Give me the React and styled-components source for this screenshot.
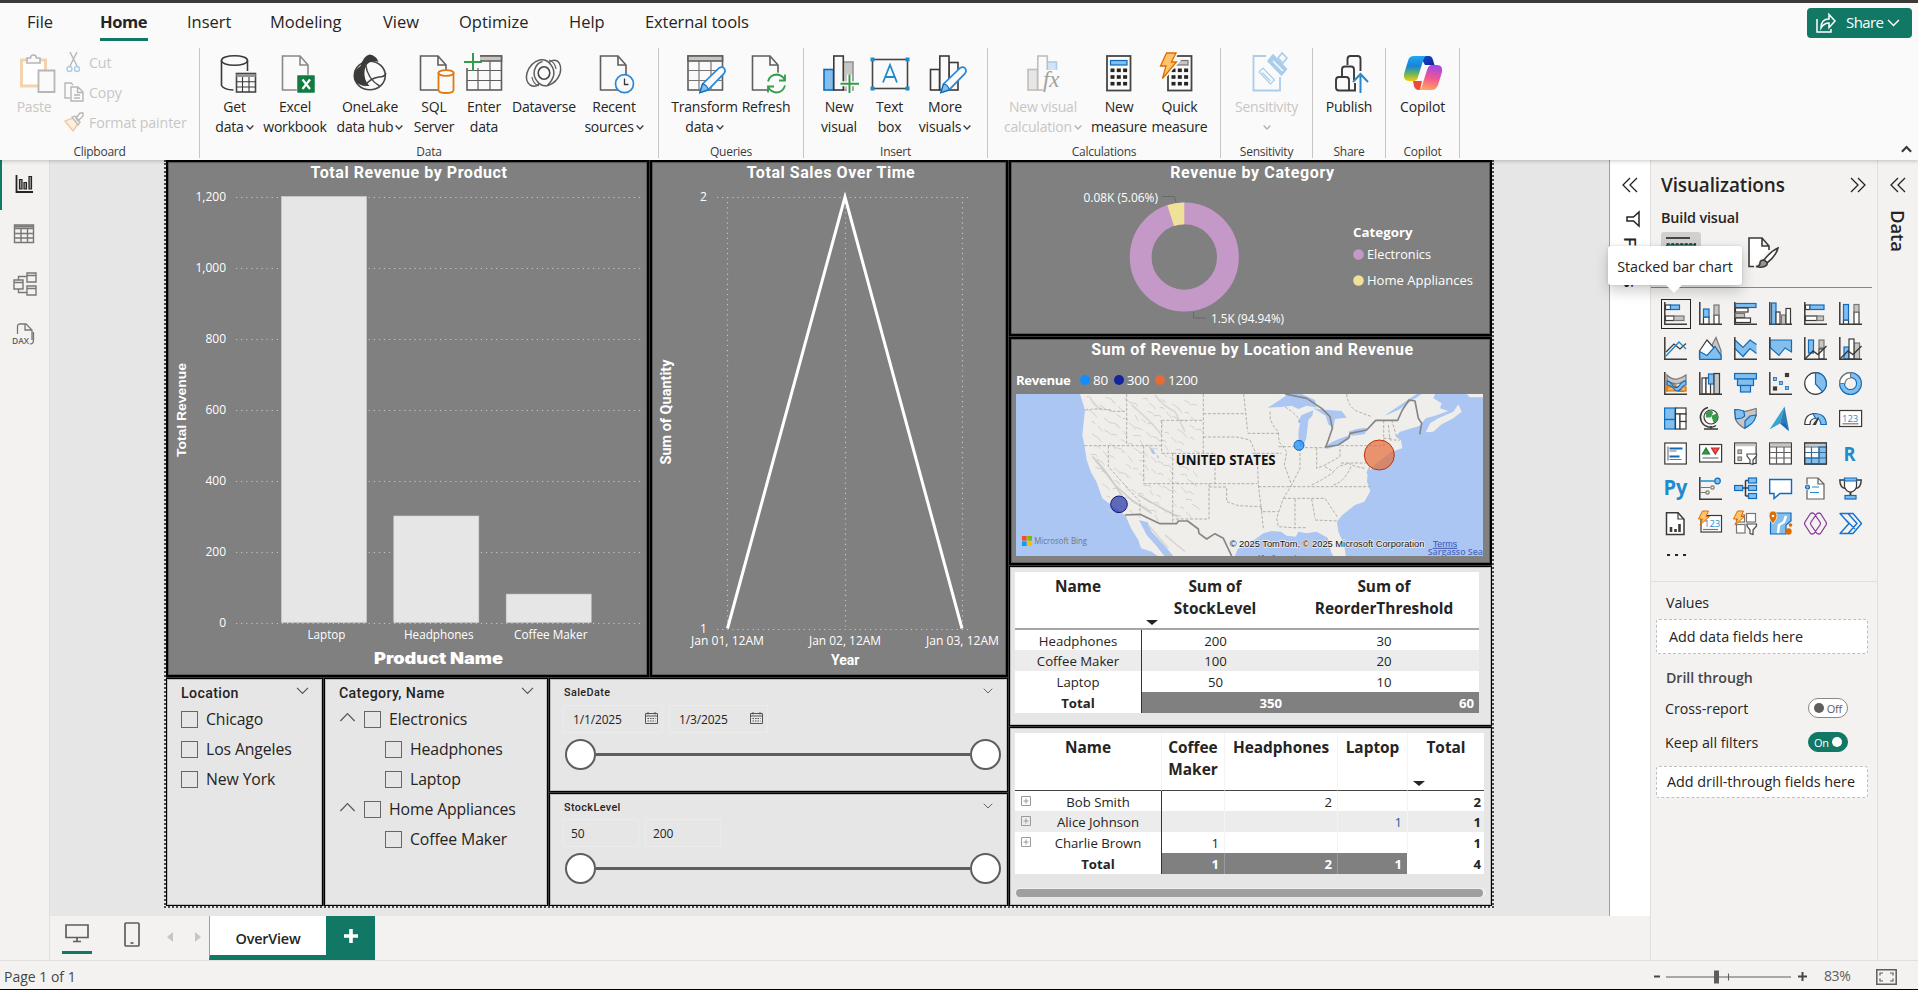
import React from "react";
import styled, { createGlobalStyle } from "styled-components";

const GREEN = "#117865";
const K = "#3b3a39";
const B = "#83beec";
const BS = "#0f6cbd";
const G = "#c8c6c4";
const GS = "#797775";
const UI = `"Open Sans", "Noto Sans", sans-serif`;
const DIN = `Roboto, "Liberation Sans", sans-serif`;

const Global = createGlobalStyle`
  * { box-sizing: border-box; }
  html, body { margin: 0; padding: 0; overflow: hidden; }
  body { font-family: ${UI}; font-size: 13.7px; color: #252423; background: #f3f2f1; }
  svg { display: block; flex: none; overflow: visible; }
`;

const Window = styled.div`
  width: 1918px; height: 990px; display: flex; flex-direction: column;
  border-top: 3px solid ${K}; border-bottom: 1px solid #000; overflow: hidden;
`;

/* ---------- ribbon ---------- */
const Header = styled.header`
  height: 157px; flex: none; background: #fafafa; display: flex; flex-direction: column;
  box-shadow: 0 1px 4px rgba(0,0,0,.22); position: relative; z-index: 2;
`;
const TabRow = styled.nav`
  height: 45px; display: flex; align-items: flex-start; padding-left: 27px;
`;
const Tab = styled.div`
  width: ${p => p.$w}px; margin-right: ${p => p.$gap}px; height: 38px; padding-top: 7px;
  font-size: 16.5px; line-height: 24px; letter-spacing: ${p => p.$ls || "0"}; white-space: nowrap;
  font-weight: ${p => (p.$active ? 700 : 400)};
  border-bottom: 3px solid ${p => (p.$active ? GREEN : "transparent")};
`;
const ShareButton = styled.button`
  margin: 5px 6px 0 auto; width: 105px; height: 30px; border: 0; border-radius: 4px; background: ${GREEN};
  color: #fff; font: 15px/20px ${UI}; letter-spacing: -0.6px; display: flex; align-items: center; padding: 0 0 0 9px;
  span { margin: -2px 4px 0 10px; }
`;
const RibbonRow = styled.div`
  display: flex; height: 110px; align-items: stretch;
`;
const Group = styled.section`
  width: ${p => p.$w}px; border-right: 1px solid #c8c6c4; display: flex; flex-direction: column;
  justify-content: space-between; align-items: stretch;
`;
const GroupBody = styled.div`
  display: flex; padding-left: ${p => p.$pad || 0}px; padding-top: 5px;
`;
const GroupName = styled.div`
  text-align: center; font-size: 12px; line-height: 16px; letter-spacing: -0.25px; height: 14px; color: #3b3a39;
`;
const RButton = styled.div`
  width: ${p => p.$w}px; display: flex; flex-direction: column; align-items: center; white-space: nowrap;
  color: ${p => (p.$off ? "#c8c6c4" : "#252423")};
  font-size: 14px; letter-spacing: -0.2px;
`;
const RLabel = styled.div`
  height: 20px; line-height: 20px; display: flex; align-items: center; justify-content: center; gap: 2px;
  &:first-of-type { margin-top: 4px; }
`;
const ClipList = styled.div`
  display: flex; flex-direction: column; color: #c8c6c4; font-size: 14.2px; letter-spacing: -0.1px; margin-top: -6px;
`;
const ClipItem = styled.div`
  height: 30px; display: flex; align-items: center; gap: 5px;
  svg { width: 20px; height: 20px; }
`;
const Collapse = styled.div`
  margin: 98px 6px 0 auto;
`;

const Chev = ({ s = 8, c = K, w = 1.6, up }) => (
  <svg width={s} height={s * 0.6} viewBox="0 0 10 6">
    <path d={up ? "M.8 5.3 5 1l4.2 4.3" : "M.8.7 5 5 9.2.7"} fill="none" stroke={c} strokeWidth={w} />
  </svg>
);
const I40 = ({ children }) => (
  <svg width="40" height="40" viewBox="0 0 40 40" fill="none" stroke={K} strokeWidth="1.6">{children}</svg>
);
const doc = (x, r, c = "#605e5c") => (
  <>
    <path d={`M${x} 3h${r - x - 8}l8 9v25h-${r - x}z`} fill="#fafafa" stroke={c} />
    <path d={`M${r - 8} 3v9h8`} stroke={c} />
  </>
);
const pencil = (x) => (
  <>
    <path d={`M${x} 39.5l2.6-8.500 16.5-16q3-2 5 .2t0 5.200l-16 16.500z`} fill="#fafafa" stroke="#2b88d8" strokeWidth="1.7" />
    <path d={`M${x} 39.5l2.6-8.500q5 1 5.5 5.900z`} fill="#83beec" stroke="#0f6cbd" strokeWidth="1.2" />
  </>
);
const calc = (x) => (
  <>
    <rect x={x} y="3" width="23.5" height="34.5" fill="#fafafa" stroke="#484644" strokeWidth="1.8" />
    {[0, 1, 2].map(r => [0, 1, 2].map(c => (
      <rect key={r + "" + c} x={x + 3.5 + c * 6.3} y={15.5 + r * 6.7} width="4" height="3.6" fill="#252423" stroke="none" />
    )))}
  </>
);

const icons = {
  paste: (
    <I40>
      <path d="M7.500 7h24v26h-24z" fill="#fff" stroke="#f3d3ad" strokeWidth="3" />
      <path d="M13 10V5h3.500q0-3 3-3t3 3H26v5z" fill="#fafafa" stroke="#b8b6b4" />
      <path d="M24.500 17.500h16v21.500h-16z" fill="#fafafa" stroke="#b8b6b4" strokeWidth="1.8" />
    </I40>
  ),
  getData: (
    <I40>
      <ellipse cx="19.5" cy="7.5" rx="13" ry="4.8" fill="#fafafa" />
      <path d="M6.500 7.500v25q2 4 12 4.500M32.500 7.500V18" />
      <rect x="21.5" y="20.5" width="19" height="18.5" fill="#fafafa" stroke="#484644" />
      <path d="M21.500 22.500h19" stroke="#979593" strokeWidth="3" />
      <path d="M21.500 28.800h19M21.500 34h19M27.500 24v15M34 24v15" strokeWidth="1.1" />
    </I40>
  ),
  excel: (
    <I40>
      {doc(7.5, 33, "#8a8886")}
      <rect x="22" y="22" width="18" height="18" rx="1" fill="#107c41" stroke="#fafafa" strokeWidth="0.5" />
      <path d="M27.500 26.500l7.500 9.500M35 26.500l-7.500 9.500" stroke="#fff" strokeWidth="2.2" />
    </I40>
  ),
  onelake: (
    <I40>
      <ellipse cx="19.8" cy="22.5" rx="15.5" ry="14.3" stroke="#484644" />
      <path d="M10.500 13q3-10 9-11.500 7 1 9 7.500-5-2-9 .5-4 2-5 8.500-1 9 5 15Q8 34 4 26 2.500 18 10.500 13z" fill={K} stroke="none" />
      <path d="M15.500 11q2 15 14 22M15 33q5-8 14-9 6 0 7-4" stroke="#484644" strokeWidth="1.5" />
    </I40>
  ),
  sql: (
    <I40>
      {doc(6.5, 32)}
      <path d="M24.500 20v17q0 3 7.500 3t7.500-3V20z" fill="#fafafa" stroke="#e07a10" strokeWidth="1.8" />
      <ellipse cx="32" cy="20" rx="7.5" ry="2.8" fill="#fafafa" stroke="#e07a10" strokeWidth="1.8" />
    </I40>
  ),
  enter: (
    <I40>
      <rect x="3" y="3" width="34.5" height="34" stroke="#605e5c" fill="#fafafa" />
      <rect x="15" y="3" width="22.5" height="5" fill="#c8c6c4" stroke="#605e5c" />
      <path d="M14 8v29M26 8v29M3 17.500h34.500M3 27.500h34.500" stroke="#605e5c" strokeWidth="1.2" />
      <path d="M0-1h16v16H0z" fill="#fafafa" stroke="none" />
      <path d="M9 0v18M0 9h18" stroke="#359c4a" strokeWidth="2" />
    </I40>
  ),
  dataverse: (
    <I40>
      <path d="M27 12Q23 6 15.500 7 6 10 3 20q-2 8 3 12 5 3 9-1M13 28q4 6 11 4.500 9-3 12-12 2-8-2-12-5-3-9 1" stroke="#605e5c" strokeWidth="1.5" />
      <path d="M27 12q4 5 2.500 11-2 6-6 9M13 28q-4-5-2.500-11 2-7 8-8.500" stroke="#605e5c" strokeWidth="1.5" />
      <ellipse cx="20" cy="20" rx="5.8" ry="6.2" stroke="#484644" />
      <path d="M25 7q6 2 7 9M15 33q-6-2-7-9" stroke="#605e5c" strokeWidth="1.2" />
    </I40>
  ),
  recent: (
    <I40>
      {doc(6.5, 32)}
      <circle cx="30.5" cy="30.7" r="9" fill="#fafafa" stroke="#2b88d8" strokeWidth="1.7" />
      <path d="M30.500 25.500v6h4" strokeWidth="1.3" />
    </I40>
  ),
  transform: (
    <I40>
      <rect x="3" y="3" width="34.5" height="34" stroke="#605e5c" fill="#fafafa" />
      <rect x="3" y="3" width="34.5" height="5" fill="#c8c6c4" stroke="#605e5c" />
      <path d="M14 8v29M26 8v29M3 17.500h34.500M3 27.500h34.500" stroke="#797775" strokeWidth="1.2" />
      {pencil(15)}
    </I40>
  ),
  refresh: (
    <I40>
      {doc(6.5, 32)}
      <circle cx="30.5" cy="30.5" r="11" fill="#fafafa" stroke="none" />
      <path d="M22 28.500q2-7 9-7 5 .5 8 5.500M39 21.500v6h-6M39 32.500q-2 7-9 7-5-.5-8-5.500M22 39.500v-6h6" stroke="#359c4a" strokeWidth="1.8" />
    </I40>
  ),
  newVisual: (
    <I40>
      <rect x="24" y="9" width="10" height="28" fill="#c8c6c4" stroke="#979593" />
      <rect x="5" y="16.5" width="9.5" height="20.5" fill={B} stroke={BS} />
      <rect x="14.8" y="3" width="9.5" height="34" fill="#fafafa" />
      <path d="M30.500 21.500v18.500M21.500 30.700h18.500" stroke="#fafafa" strokeWidth="5" />
      <path d="M30.500 21.500v18.500M21.500 30.700h18.500" stroke="#359c4a" strokeWidth="2" />
    </I40>
  ),
  textBox: (
    <I40>
      <rect x="2.5" y="6.5" width="35" height="29" stroke="#484644" />
      {[[0.5, 4.5], [35.5, 4.5], [0.5, 33.5], [35.5, 33.5]].map(([x, y]) => <rect key={x + "," + y} x={x} y={y} width="4" height="4" fill="#1e8bcd" stroke="none" />)}
      <path d="M13 29.500 20 12l7 17.500M15.300 24h9.400" stroke="#1e8bcd" strokeWidth="1.8" />
    </I40>
  ),
  moreVisuals: (
    <I40>
      <rect x="24" y="9.5" width="9" height="27.5" />
      <rect x="5.5" y="16.5" width="9" height="20.5" />
      <rect x="14.8" y="3" width="9.2" height="34" fill="#fafafa" />
      {pencil(16)}
    </I40>
  ),
  visualCalc: (
    <I40>
      <rect x="24" y="9" width="9.5" height="12" fill="#cfe4f6" stroke="#a9cdea" />
      <rect x="5" y="16.5" width="9.5" height="20.5" fill="#e8e6e4" stroke="#c0bebc" />
      <rect x="14.8" y="3" width="9.500" height="34" fill="#fafafa" stroke="#c0bebc" />
      <path d="M20 17h20v22H20z" fill="#fafafa" stroke="none" />
      <text x="20" y="34" fontFamily="Liberation Serif, serif" fontStyle="italic" fontSize="23" fill="#a3a19f" stroke="none">fx</text>
    </I40>
  ),
  calc: (<I40>{calc(8)}<rect x="11.5" y="7.5" width="16.5" height="4.5" fill="#83beec" stroke="#0f6cbd" strokeWidth="1.2" /></I40>),
  quick: (
    <I40>
      {calc(8)}<rect x="15" y="7.5" width="13" height="4.5" fill="#c8c6c4" stroke="#797775" strokeWidth="1.2" />
      <path d="M6.500 0h9.500l-4.500 9h5L2.500 25.500 6 13H.5z" fill="#ffc36b" stroke="#fafafa" strokeWidth="4.5" />
      <path d="M6.500 0h9.500l-4.500 9h5L2.500 25.500 6 13H.5z" fill="#ffc36b" stroke="#dc6b00" strokeWidth="1.3" />
    </I40>
  ),
  sensitivity: (
    <I40>
      <path d="M19 3H6.500v34.500h26.500V24" stroke="#a9cdea" strokeWidth="1.8" />
      <path d="M12 19l4-4L27.500 27l-4 4zM15 19.500l8.500 8.500" stroke="#a9cdea" strokeWidth="1.2" />
      <path d="M21 8l5-6 13.500 14-5 6z" fill="#a9cdea" stroke="#a9cdea" />
      <path d="M26 8l10 10" stroke="#fafafa" strokeWidth="1.5" />
      <path d="M31 5l4-5 5 5-4 5z" fill="#fafafa" stroke="#a9cdea" />
    </I40>
  ),
  publish: (
    <I40>
      <path d="M18.500 12V6q0-3 3-3h7q3 0 3 3v12M13 23v-6.500q0-3 3-3h6q3 0 3 3V27M26 30v7.500H10q-3 0-3-3V27q0-3 3-3h7q3 0 3 3v10" stroke="#3b3a39" strokeWidth="1.9" />
      <path d="M31.500 40V21.500M24 29l7.500-8 7.500 8" stroke="#2b88c8" strokeWidth="2" />
    </I40>
  ),
  copilot: (
    <svg width="40" height="40" viewBox="0 0 40 40">
      <defs>
        <linearGradient id="cA" x1="0" y1="0" x2="0" y2="1"><stop offset="0" stopColor="#22a7f2" /><stop offset=".4" stopColor="#1683d8" /><stop offset=".72" stopColor="#6bb75a" /><stop offset="1" stopColor="#fdc70a" /></linearGradient>
        <linearGradient id="cB" x1=".5" y1="0" x2=".3" y2="1"><stop offset="0" stopColor="#a548e8" /><stop offset=".5" stopColor="#f0588f" /><stop offset="1" stopColor="#ffa95a" /></linearGradient>
        <linearGradient id="cC" x1="0" y1="0" x2="1" y2="1"><stop offset="0" stopColor="#0b54c4" /><stop offset="1" stopColor="#1a1f9e" /></linearGradient>
      </defs>
      <path d="M17 3h9q3 0 4 4l1.500 5H22z" fill="url(#cC)" />
      <path d="M10 28h9l-2 9h-1q-4 0-5-4z" fill="#ee4a35" />
      <path d="M11 3h12q-2 1-3 5l-5 16q-1 4-4 4H6q-6 0-5-7l4-13q1-5 6-5z" fill="url(#cA)" />
      <path d="M24 12h10q6 0 5 7l-4 13q-2 5-6 5H15q3 0 4-4l5-16q1-4 4-5z" fill="url(#cB)" />
    </svg>
  ),
};

const clipIcons = {
  cut: <svg viewBox="0 0 20 20" fill="none"><path d="M6 0l7 14M13 0L6 14" stroke="#b8b6b4" strokeWidth="1.4" /><circle cx="5.5" cy="17" r="2.5" stroke="#a9cdea" strokeWidth="1.4" /><circle cx="13" cy="17" r="2.5" stroke="#a9cdea" strokeWidth="1.4" /></svg>,
  copy: <svg viewBox="0 0 20 20" fill="none" stroke="#b8b6b4" strokeWidth="1.4"><path d="M6 16H1V1h6l2 2M7 5h7l5 5v9H7zM13.500 5v5.500H19M10 13h6M10 16h6" /></svg>,
  brush: <svg viewBox="0 0 20 20" fill="none" stroke="#b8b6b4" strokeWidth="1.3"><path d="M1 9l8-3 5 6-5 7z" fill="#fdeedd" stroke="#f0c49a" /><path d="M8 5l3-1 5 6-2 3zM12 6l4-5h3v3l-5 5z" fill="#fafafa" /></svg>,
};

const RibbonButton = ({ w, icon, a, b, chev, off }) => (
  <RButton $w={w} $off={off}>
    {icons[icon]}
    <RLabel>{a}</RLabel>
    {(b || chev) && <RLabel>{b}{chev && <Chev c={off ? "#b3b0ad" : K} />}</RLabel>}
  </RButton>
);

const ribbonGroups = [
  { name: "Data", w: 459, pad: 8, items: [
    { w: 53, icon: "getData", a: "Get", b: "data", chev: 1 }, { w: 68, icon: "excel", a: "Excel", b: "workbook" },
    { w: 82, icon: "onelake", a: "OneLake", b: "data hub", chev: 1 }, { w: 46, icon: "sql", a: "SQL", b: "Server" },
    { w: 54, icon: "enter", a: "Enter", b: "data" }, { w: 66, icon: "dataverse", a: "Dataverse" },
    { w: 74, icon: "recent", a: "Recent", b: "sources", chev: 1 }] },
  { name: "Queries", w: 145, pad: 9, items: [
    { w: 73, icon: "transform", a: "Transform", b: "data", chev: 1 }, { w: 50, icon: "refresh", a: "Refresh" }] },
  { name: "Insert", w: 184, pad: 8, items: [
    { w: 54, icon: "newVisual", a: "New", b: "visual" }, { w: 47, icon: "textBox", a: "Text", b: "box" },
    { w: 64, icon: "moreVisuals", a: "More", b: "visuals", chev: 1 }] },
  { name: "Calculations", w: 233, pad: 10, items: [
    { w: 90, icon: "visualCalc", a: "New visual", b: "calculation", chev: 1, off: 1 }, { w: 62, icon: "calc", a: "New", b: "measure" },
    { w: 59, icon: "quick", a: "Quick", b: "measure" }] },
  { name: "Sensitivity", w: 92, pad: 0, items: [{ w: 91, icon: "sensitivity", a: "Sensitivity", chev: 1, off: 1 }] },
  { name: "Share", w: 73, pad: 0, items: [{ w: 72, icon: "publish", a: "Publish" }] },
  { name: "Copilot", w: 74, pad: 0, items: [{ w: 73, icon: "copilot", a: "Copilot" }] },
];

const tabs = [["File", 26, 47], ["Home", 48, 39, "-0.4px"], ["Insert", 43, 40], ["Modeling", 74, 39], ["View", 38, 38], ["Optimize", 71, 39], ["Help", 36, 40], ["External tools", 104, 0, "-0.1px"]];

function Ribbon() {
  return (
    <Header>
      <TabRow>
        {tabs.map(([t, w, g, ls]) => <Tab key={t} $w={w} $gap={g} $ls={ls} $active={t === "Home"}>{t}</Tab>)}
        <ShareButton>
          <svg width="20" height="20" viewBox="0 0 20 20" fill="none" stroke="#fff" strokeWidth="1.5">
            <path d="M1 6v13h14v-3" /><path d="M5 15q0-9 8-9V1.500L19 8l-6 6.500V10q-5 0-8 5z" />
          </svg>
          <span>Share</span>
          <Chev s={13} c="#fff" w={1.1} />
        </ShareButton>
      </TabRow>
      <RibbonRow>
        <Group $w={200}>
          <GroupBody $pad={4}>
            <RibbonButton w={60} icon="paste" a="Paste" off />
            <ClipList>
              <ClipItem>{clipIcons.cut}Cut</ClipItem>
              <ClipItem>{clipIcons.copy}Copy</ClipItem>
              <ClipItem>{clipIcons.brush}Format painter</ClipItem>
            </ClipList>
          </GroupBody>
          <GroupName>Clipboard</GroupName>
        </Group>
        {ribbonGroups.map(g => (
          <Group key={g.name} $w={g.w}>
            <GroupBody $pad={g.pad}>{g.items.map((it, i) => <RibbonButton key={i} {...it} />)}</GroupBody>
            <GroupName>{g.name}</GroupName>
          </Group>
        ))}
        <Collapse><Chev s={11} up w={2} /></Collapse>
      </RibbonRow>
    </Header>
  );
}

/* ---------- body ---------- */
const Body = styled.div`display: flex; height: 800px; flex: none;`;
const Rail = styled.aside`
  width: 50px; background: #f3f2f1; border-right: 1px solid #e1dfdd; display: flex; flex-direction: column; flex: none;
`;
const RailItem = styled.div`
  height: 50px; display: flex; align-items: center; padding-left: 13px; padding-bottom: 2px;
  border-left: ${p => (p.$active ? `2px solid ${GREEN}` : "0")};
`;
const Center = styled.main`width: 1600px; display: flex; flex-direction: column; flex: none;`;
const Work = styled.div`height: 756px; display: flex;`;
const Canvas = styled.div`width: 1559px; background: #e6e6e6; padding-left: 114px; display: flex; align-items: flex-start;`;
const FilterStrip = styled.div`
  width: 41px; background: #fff; border-left: 1px solid #a19f9d; display: flex; flex-direction: column; align-items: center;
  padding-top: 17px;
`;
const FilterIcon = styled.div`margin: 18px 0 0 5px;`;
const Vertical = styled.div`
  writing-mode: vertical-rl; font-size: ${p => p.$fs || 17}px; font-weight: 600; line-height: 22px; letter-spacing: ${p => p.$ls || "0"};
  margin-top: ${p => p.$mt}px;
`;
const Report = styled.div`
  width: 1330px; height: 748px; background: #3a3a3a; display: flex; gap: 1px;
  border: 2px dotted #4a4a4a; border-top: 0;
  background-clip: padding-box;
`;
const Col = styled.div`display: flex; flex-direction: column; gap: 1px; width: ${p => p.$w}px; flex: none;`;
const Row = styled.div`display: flex; gap: 1px; height: ${p => p.$h}px; flex: none;`;
const Visual = styled.section`
  width: ${p => (p.$w ? p.$w + "px" : "auto")}; height: ${p => (p.$h ? p.$h + "px" : "auto")}; flex: none;
  border: ${p => (p.$dark ? 2 : 1)}px solid #000; background: ${p => (p.$dark ? "#808080" : "#e6e6e6")};
  box-shadow: inset 0 0 0 1px ${p => (p.$dark ? "#5c5c5c" : "#bdbdbd")};
  overflow: hidden;
`;
const VTitle = styled.h3`
  margin: 0; height: 22px; text-align: center; color: #fff; font: 700 16px/22px ${DIN};
  letter-spacing: ${p => p.$ls || "0.3px"}; padding-left: ${p => p.$pl || 0}px;
`;

const T = ({ x, y, w, children, size = 12, anchor = "start", weight = 400, fill = "#fff", family = UI, rot }) => (
  <text x={x} y={y} fontSize={size} textAnchor={anchor} fontWeight={weight} fill={fill} fontFamily={family}
    textLength={w} lengthAdjust="spacingAndGlyphs" transform={rot ? `rotate(-90 ${x} ${y})` : undefined}>{children}</text>
);

const dots = { stroke: "#c4c4c4", strokeWidth: 1.2, strokeDasharray: "1.2 3.9", fill: "none" };

function BarChart() {
  const ticks = ["0", "200", "400", "600", "800", "1,000", "1,200"];
  const bars = [[281.5, 1200], [393.8, 300], [506.2, 80]];
  return (
    <Visual $dark $w={483} $h={517}>
      <VTitle $ls="0.56px" $pl={3}>Total Revenue by Product</VTitle>
      <svg width="479" height="491" viewBox="168 184 479 491">
        {ticks.map((t, i) => (
          <g key={t}>
            <path d={`M236 ${623.5 - i * 71}H642`} {...dots} />
            <T x={226} y={627 - i * 71} anchor="end" size={12}>{t}</T>
          </g>
        ))}
        {bars.map(([x, v]) => <rect key={x} x={x} y={622.5 - v * 0.355} width="85" height={v * 0.355} fill="#e6e6e6" stroke="#cfcfcf" strokeWidth="0.6" />)}
        <T x={307.5} y={638.5} w={38}>Laptop</T>
        <T x={404} y={638.5} w={69.5}>Headphones</T>
        <T x={514} y={638.5} w={73.5}>Coffee Maker</T>
        <T x={374} y={664} w={129} size={16} weight={900} family={`Inter, "Liberation Sans", sans-serif`}>Product Name</T>
        <T x={186} y={457} w={94} size={13.5} weight={700} family={`"Liberation Sans", sans-serif`} rot>Total Revenue</T>
      </svg>
    </Visual>
  );
}

function LineChart() {
  return (
    <Visual $dark $w={358} $h={517}>
      <VTitle $ls="0.55px" $pl={4}>Total Sales Over Time</VTitle>
      <svg width="354" height="491" viewBox="652 184 354 491">
        <path d="M717 197.500H972M717 629.500H972M727.500 197V629M845.500 197V629M962.500 197V629" {...dots} />
        <path d="M727.500 628.500L845 197 962 628.500" fill="none" stroke="#fff" strokeWidth="3" />
        <T x={700} y={201} size={12}>2</T>
        <T x={700} y={632.5} size={12}>1</T>
        <T x={691} y={645} w={73} size={11.8}>Jan 01, 12AM</T>
        <T x={809} y={645} w={72} size={11.8}>Jan 02, 12AM</T>
        <T x={926} y={645} w={73} size={11.8}>Jan 03, 12AM</T>
        <T x={831} y={665} w={28.5} size={14} weight={700} family={DIN}>Year</T>
        <T x={671} y={464.5} w={105} size={14} weight={700} family={DIN} rot>Sum of Quantity</T>
      </svg>
    </Visual>
  );
}

function Donut() {
  const a = (-18.2 * Math.PI) / 180, cx = 1184.3, cy = 257, R = 54.5, r = 32.7;
  const p = (rad) => `${cx + rad * Math.sin(a)} ${cy - rad * Math.cos(a)}`;
  return (
    <Visual $dark $h={176}>
      <VTitle $ls="0.65px" $pl={4}>Revenue by Category</VTitle>
      <svg width="479" height="150" viewBox="1011 184 479 150">
        <circle cx={cx} cy={cy} r={(R + r) / 2} stroke="#c499c8" strokeWidth={R - r} fill="none" />
        <path d={`M${p(R)}A${R} ${R} 0 0 1 ${cx} ${cy - R}V${cy - r}A${r} ${r} 0 0 0 ${p(r)}Z`} fill="#f0e199" />
        <path d="M1162 196.500h12.500l1.500 6M1193.500 312v6h13" fill="none" stroke="#6a6866" strokeWidth="1" />
        <T x={1083.5} y={202} w={74.5} size={12.5}>0.08K (5.06%)</T>
        <T x={1211} y={323} w={73} size={12.5}>1.5K (94.94%)</T>
        <T x={1353} y={237} w={59.5} size={13} weight={700}>Category</T>
        <circle cx="1358.5" cy="254.5" r="5.3" fill="#c499c8" />
        <T x={1367} y={259} w={64} size={13.5}>Electronics</T>
        <circle cx="1358.5" cy="280.5" r="5.3" fill="#f0e199" />
        <T x={1367} y={285} w={106} size={13.5}>Home Appliances</T>
      </svg>
    </Visual>
  );
}

const MapLegend = styled.div`
  display: flex; align-items: center; height: 20px; margin-top: 9px; padding-left: 5px; color: #fff; font-size: 13.5px;
  b { letter-spacing: -0.35px; width: 64px; font-size: 13.2px; }
`;
const LegendItem = styled.span`
  display: flex; align-items: center; gap: 3px; margin-right: 6px; letter-spacing: -0.3px; white-space: nowrap;
  &::before { content: ""; width: 10px; height: 10px; border-radius: 50%; background: ${p => p.$c}; }
`;
const MapFrame = styled.div`margin: 4px 0 0 5px; width: 467px; height: 162px; overflow: hidden;`;

const terrain = Array.from({ length: 150 }, (_, i) => {
  const x = 245 + ((i * 89) % 330), y = 35 + ((i * 53) % 360);
  return x - 245 < (y - 170) * 0.3 ? "" : `M${x} ${y}l${6 + (i % 5) * 3} ${(i % 3) * 6 - 1}l4 ${5 + (i % 4)}`;
}).join("");

function MapVisual() {
  return (
    <Visual $dark $h={228}>
      <VTitle $ls="0.56px" $pl={4}>Sum of Revenue by Location and Revenue</VTitle>
      <MapLegend><b>Revenue</b><LegendItem $c="#118dff">80</LegendItem><LegendItem $c="#12239e">300</LegendItem><LegendItem $c="#e66c37">1200</LegendItem></MapLegend>
      <MapFrame>
        <svg width="467" height="162" viewBox="33 27 1401 486">
          <rect x="33" y="27" width="1401" height="486" fill="#abc6f2" />
          <path d="M225 27L240 75 236 110 232 150 238 180 245 225 258 262 275 292 292 340 330 368 362 392 378 430 400 465 408 490 440 500 458 513H478L452 480 425 450 402 405 428 412 440 440 475 478 505 513H690L698 492 730 478 775 445 800 438 828 440 845 452 872 455 880 440 905 445 935 440 968 458 978 500 985 513H1022L1018 480 1000 440 996 410 1012 390 1050 360 1078 350 1096 318 1086 290 1088 265 1108 240 1140 215 1160 200 1192 190 1188 165 1172 155 1185 140 1245 122 1262 100 1290 92 1330 78 1305 70 1310 55 1285 40 1290 27H1250L1180 75 1140 92 1150 84 1235 27Z" fill="#efeeea" />
          <path d="M1262 142L1275 115 1300 100 1345 80 1360 58 1370 80 1345 100 1310 118 1285 140Z M1385 27h49v10h-40z" fill="#efeeea" />
          <g fill="#abc6f2">
            <path d="M788 68L820 48 850 27H890L930 45 935 68 905 62 880 72 860 62 830 66Z" />
            <path d="M884 182Q876 150 885 115L878 112 890 90 925 76 922 92 910 105 904 160 893 186Z" />
            <path d="M925 70L960 74 1010 78 1025 98 990 102 985 130 970 118 962 92Z" />
            <path d="M958 186Q985 165 1036 150L1030 164 985 186 965 192Z" />
            <path d="M1030 140Q1060 126 1090 130L1078 148 1040 152Z" />
            <path d="M430 182l16 12 6 14-10-2zM455 206l8 12-6 2z" />
            <path d="M1085 262l8-20 6 20-4 24z" />
          </g>
          <path d={terrain} fill="none" stroke="#cfcdc7" strokeWidth="2.5" />
          <path d="M262 215Q290 240 330 300L380 345 440 385M270 225Q310 270 350 330M400 330L470 370 520 395" fill="none" stroke="#c9c7c1" strokeWidth="5" opacity=".8" />
          <path d="M450 30q20 30 60 50l30 60M255 35q10 30 40 40M380 60q60 50 90 90M480 450l60 50M430 420l60 70" fill="none" stroke="#dad8d2" strokeWidth="5" />
          <path d="M240 75q60-8 80 4h45M365 27V180M238 182H470M310 182V245L405 350V385M416 182V296M470 106V205M470 106H595M595 27V205M595 86H724M716 27L728 140M595 156H695L735 165M505 205H630V296M503 205V410M470 205H505M416 296H757M612 296V402H505M728 145H820M735 165L757 215 760 300M742 205H830M612 306H665V350L700 362 768 365M760 305H850M760 300L770 380H820M768 365L775 430M820 185H880M796 80Q790 110 820 140L822 170 845 200 838 240 860 300 835 340 815 400 820 425 860 428M870 342V430M920 342L930 400M885 190V250L860 300M850 305H1095M835 340H960L1000 400M865 428H905M930 405L1000 408M935 188V250L960 240 1005 215V185M900 188H960M1008 182H1140M1008 234H1085M960 245L985 260 1000 245 1030 235M920 300Q960 280 985 262M1030 235Q1050 245 1080 250M985 300Q1020 290 1040 240M1136 106V180M1150 120L1155 165H1185M1136 160H1160M1160 105L1175 155M1025 27Q1030 70 1060 80L1100 95M840 66Q880 90 885 112" fill="none" stroke="#aaa69f" strokeWidth="2.6" strokeDasharray="9 5" />
          <path d="M360 390L405 388 465 416H515L520 408H548L580 432 582 445 605 462 630 446 655 460 680 513M840 27L905 40 950 70 975 95 982 130 970 165 962 186 1000 180 1032 158 1035 145 1085 135 1112 106H1178L1192 75 1212 45 1230 48 1240 100 1250 115 1244 148" fill="none" stroke="#868686" strokeWidth="5" strokeLinejoin="round" />
          <circle cx="342" cy="358" r="25" fill="#12239e" fillOpacity=".65" stroke="#12187e" strokeWidth="3" />
          <circle cx="882" cy="181" r="15" fill="#118dff" fillOpacity=".7" stroke="#1160c0" strokeWidth="3" />
          <circle cx="1123" cy="210" r="45" fill="#e66c37" fillOpacity=".7" stroke="#b5360c" strokeWidth="3" />
          <T x={512} y={239} w={300} size={41} weight={700} fill="#111">UNITED STATES</T>
          <path d="M51 453h14v14h-14z" fill="#f25022" /><path d="M67 453h14v14h-14z" fill="#7fba00" />
          <path d="M51 469h14v14h-14z" fill="#00a4ef" /><path d="M67 469h14v14h-14z" fill="#ffb900" />
          <T x={88} y={477} w={158} size={26} fill="#6f7680">Microsoft Bing</T>
          <g stroke="#efeeea" strokeWidth="4" paintOrder="stroke">
            <T x={674} y={486} w={584} size={28} fill="#111" family={`"Liberation Sans", sans-serif`}>© 2025 TomTom, © 2025 Microsoft Corporation</T>
          </g>
          <T x={1283} y={486} w={74} size={28} fill="#3b55b8" family={`"Liberation Sans", sans-serif`}>Terms</T>
          <path d="M1283 490h74" stroke="#3b55b8" strokeWidth="3" />
          <T x={1268} y={511} w={166} size={27} weight={600} fill="#4a6cc4">Sargasso Sea</T>
          <T x={724} y={530} w={180} size={27} weight={600} fill="#4a6cc4">Gulf of Mexico</T>
        </svg>
      </MapFrame>
    </Visual>
  );
}

/* ---------- tables ---------- */
const Table = styled.div`
  margin: 5px 0 0 5px; width: ${p => p.$w}px; display: grid; grid-template-columns: ${p => p.$cols};
  grid-template-rows: 58px 20px 21px 21px 21px; background: #fff; font-size: 13.2px;
`;
const Th = styled.div`
  font-weight: 700; font-size: 15.4px; line-height: 22px; text-align: center; padding-top: 4px; white-space: nowrap;
  border-bottom: ${p => p.$line}; display: flex; flex-direction: column; justify-content: space-between;
  ${p => p.$sep && "border-left: 1px solid #f3f3f3;"}
`;
const Sort = styled.i`
  width: 0; height: 0; border: 6px solid transparent; border-top: 5px solid #252423; border-bottom: 0; margin: 0 0 4px 5px;
`;
const Td = styled.div`
  line-height: ${p => (p.$foot ? 22 : 23)}px; white-space: nowrap; overflow: hidden;
  text-align: ${p => p.$al || "center"}; padding: 0 ${p => p.$pr || 0}px 0 ${p => p.$pl || 0}px;
  font-weight: ${p => (p.$b || p.$foot ? 700 : 400)}; color: ${p => p.$c || "#252423"};
  background: ${p => p.$bg || "transparent"};
  border-left: ${p => p.$bl || "0"};
`;
const NameCell = styled(Td)`
  display: flex; align-items: flex-start; padding-left: 6px;
  svg { margin-top: 5px; }
  span { flex: 1; padding-left: 4px; }
`;
const Scroll = styled.div`
  margin: 14px 5px 0 5px; height: 9px; border-radius: 5px; background: #efefef; padding: 1px 3px 0 1px;
  &::before { content: ""; display: block; height: 7.5px; border-radius: 4px; background: #a19f9d; }
`;
const Plus = () => (
  <svg width="10" height="10" viewBox="0 0 10 10"><path d="M.5.5h9v9h-9zM5 2.500v5M2.500 5h5" fill="none" stroke="#9a9a9a" /></svg>
);

function StockTable() {
  const rows = [["Headphones", "200", "30"], ["Coffee Maker", "100", "20"], ["Laptop", "50", "10"]];
  const line = "2px solid #a6a6a6";
  const dark = { $foot: true, $al: "right", $c: "#fff", $bg: "#808080" };
  return (
    <Visual $h={160}>
      <Table $w={464} $cols="126px 148px 190px">
        <Th $line={line}>Name</Th>
        <Th $line={line}><span>Sum of<br />StockLevel</span><Sort /></Th>
        <Th $line={line}><span>Sum of<br />ReorderThreshold</span></Th>
        {rows.map((r, i) => r.map((c, j) => (
          <Td key={i + "-" + j} $bg={i === 1 ? "#ececec" : 0} $bl={j === 1 ? "1px solid #333" : 0}>{c}</Td>
        )))}
        <Td $foot>Total</Td>
        <Td {...dark} $pr={7} $bl="1px solid #333">350</Td>
        <Td {...dark} $pr={5}>60</Td>
      </Table>
    </Visual>
  );
}

function MatrixTable() {
  const rows = [["Bob Smith", "", "2", "", "2"], ["Alice Johnson", "", "", "1", "1"], ["Charlie Brown", "1", "", "", "1"]];
  const line = "1px solid #444";
  const sep = "1px solid #f3f3f3";
  const dark = { $foot: true, $al: "right", $pr: 5, $c: "#fff", $bg: "#808080" };
  return (
    <Visual $h={179}>
      <Table $w={469} $cols="146px 63px 113px 70px 77px">
        <Th $line={line}>Name</Th>
        <Th $line={line} $sep>Coffee<br />Maker</Th>
        <Th $line={line} $sep>Headphones</Th>
        <Th $line={line} $sep>Laptop</Th>
        <Th $line={line} $sep>Total<Sort /></Th>
        {rows.map((r, i) => r.map((c, j) => j === 0
          ? <NameCell key={i + "n"} $bg={i === 1 ? "#ececec" : 0}><Plus /><span>{c}</span></NameCell>
          : <Td key={i + "-" + j} $al="right" $pr={j === 4 ? 3 : 5} $b={j === 4} $c={c === "1" && j === 3 ? "#1f5f9e" : undefined}
              $bg={i === 1 ? "#ececec" : 0} $bl={j === 1 ? "1px solid #333" : sep}>{c}</Td>))}
        <Td $foot $pl={20}>Total</Td>
        <Td {...dark} $bl="1px solid #333">1</Td>
        <Td {...dark} $bl="1px solid #999">2</Td>
        <Td {...dark} $bl="1px solid #999">1</Td>
        <Td $foot $al="right" $pr={3}>4</Td>
      </Table>
      <Scroll />
    </Visual>
  );
}

/* ---------- slicers ---------- */
const SHead = styled.div`
  display: flex; justify-content: space-between; align-items: center;
  font: ${p => p.$small ? "500 10.8px" : "500 14.2px"}/20px ${DIN}; letter-spacing: ${p => (p.$small ? 0.4 : 0.35)}px;
  padding: 2px ${p => (p.$small ? 14 : 13)}px 0 14px; height: 25px; margin-bottom: ${p => (p.$small ? 1 : 0)}px;
  svg { margin-bottom: 3px; }
`;
const Check = styled.div`
  height: 30px; display: flex; align-items: center; font-size: 15.8px; letter-spacing: -0.12px; padding-left: ${p => p.$pl}px; white-space: nowrap;
  i { width: 17px; height: 17px; border: 1px solid #666; margin-right: 8px; flex: none; }
  svg { margin-right: 8px; margin-bottom: 4px; }
`;
const Fields = styled.div`display: flex; gap: 6px; padding-left: 13px; margin-top: ${p => p.$mt || 0}px;`;
const Field = styled.div`
  width: ${p => p.$w}px; height: 28px; border: 1px solid #ebebeb; padding: 0 4px 0 ${p => p.$pl}px; display: flex; align-items: center; justify-content: space-between;
  font-size: 12px; letter-spacing: -0.15px;
  svg { margin-bottom: 3px; }
`;
const Slider = styled.div`
  display: flex; align-items: center; margin: 8px 6.5px 0 14.5px; height: 27px;
  &::before, &::after { content: ""; width: 27px; height: 27px; border: 2px solid #605e5c; border-radius: 50%; background: #fff; }
  i { flex: 1; height: 3px; background: #605e5c; }
`;
const Cal = () => (
  <svg width="13" height="12" viewBox="0 0 13 12" fill="none" stroke="#555"><path d="M.5 1.500h12v10H.5zM.5 4h12M3 0v2.500M10 0v2.500" /><path d="M2.500 6.500h8M2.500 9h8" strokeDasharray="1.5 1" /></svg>
);

function Slicers() {
  return (
    <Row $h={228}>
      <Visual $w={157}>
        <SHead>Location<Chev s={13} w={0.9} c="#555" /></SHead>
        {["Chicago", "Los Angeles", "New York"].map(t => <Check key={t} $pl={14}><i />{t}</Check>)}
      </Visual>
      <Visual $w={224}>
        <SHead>Category, Name<Chev s={13} w={0.9} c="#555" /></SHead>
        {[["Electronics", 1], ["Headphones"], ["Laptop"], ["Home Appliances", 1], ["Coffee Maker"]].map(([t, top]) => (
          <Check key={t} $pl={top ? 14 : 60}>{top && <Chev s={17} up w={0.7} c="#555" />}<i />{t}</Check>
        ))}
      </Visual>
      <Col $w={459}>
        <Visual $h={114}>
          <SHead $small>SaleDate<Chev s={10} w={0.9} c="#555" /></SHead>
          <Fields>
            <Field $w={100} $pl={9}>1/1/2025<Cal /></Field>
            <Field $w={99} $pl={9}>1/3/2025<Cal /></Field>
          </Fields>
          <Slider><i /></Slider>
        </Visual>
        <Visual $h={113}>
          <SHead $small>StockLevel<Chev s={10} w={0.9} c="#555" /></SHead>
          <Fields $mt={-1}>
            <Field $w={76} $pl={7}>50</Field>
            <Field $w={76} $pl={7}>200</Field>
          </Fields>
          <Slider><i /></Slider>
        </Visual>
      </Col>
    </Row>
  );
}

/* ---------- page tabs + status ---------- */
const PageTabs = styled.div`height: 44px; display: flex; background: #f3f2f1;`;
const ViewBtn = styled.div`
  width: 30px; height: 38px; margin-left: ${p => p.$ml}px; display: flex; justify-content: center; align-items: flex-start; padding-top: ${p => p.$pt}px;
  border-bottom: ${p => (p.$on ? `3px solid ${GREEN}` : "0")};
`;
const Arrow = styled.i`
  margin: 16px 0 0 ${p => p.$ml}px; height: 0; border: 5px solid transparent;
  ${p => (p.$r ? "border-left: 6px solid #c8c6c4; border-right: 0;" : "border-right: 6px solid #c8c6c4; border-left: 0;")}
`;
const PageTab = styled.div`
  margin-left: 8px; width: 117px; background: #fff; border-left: 1px solid #a19f9d; border-bottom: 5px solid ${GREEN};
  text-align: center; line-height: 45px; font-weight: 600; font-size: 14.4px; letter-spacing: -0.2px;
`;
const AddTab = styled.div`width: 49px; background: ${GREEN}; display: flex; justify-content: center; padding-top: 13px;`;
const Status = styled.footer`
  height: 29px; flex: none; border-top: 1px solid #e1dfdd; background: #f3f2f1; display: flex; align-items: center; padding: 3px 21px 0 4px;
  color: #484644; font-size: 14px;
`;
const Pct = styled.span`margin: -3px 24px 0 17px; font-size: 14px; letter-spacing: -0.4px; color: #605e5c; width: 28px;`;
const Spacer = styled.div`flex: 1;`;

/* ---------- right panes ---------- */
const VizPane = styled.aside`
  width: 227px; border-left: 1px solid #e1dfdd; background: #f3f2f1; display: flex; flex-direction: column; flex: none;
`;
const DataPane = styled.aside`
  width: 41px; border-left: 1px solid #e1dfdd; background: #f3f2f1; display: flex; flex-direction: column; align-items: center; padding-top: 17px; flex: none;
`;
const PaneHead = styled.div`
  display: flex; justify-content: space-between; align-items: center; height: 30px; margin-top: 10px; padding: 0 11px 0 10px;
  font-size: 18.9px; font-weight: 600; letter-spacing: -0.1px; flex: none;
`;
const Sub = styled.div`padding-left: 10px; margin-top: 7px; height: 20px; line-height: 21px; font-weight: 600; font-size: 14.4px; letter-spacing: -0.15px;`;
const ModeRow = styled.div`
  display: flex; margin: 5px 5px 0 0; height: 56px; padding-left: 10px; border-bottom: 1px solid #8a8886; align-items: flex-start; gap: 47px;
`;
const Mode = styled.div`
  width: 40px; height: 40px; border-radius: 3px; padding: 5px 0 0 ${p => (p.$on ? 5 : 0)}px; background: ${p => (p.$on ? "#d2d0ce" : "transparent")};
`;
const Gallery = styled.div`
  display: grid; grid-template-columns: repeat(6, 35px); grid-auto-rows: 35px; padding-left: 7px; margin-top: 8px;
`;
const Cell = styled.div`
  display: flex; align-items: center; justify-content: center; margin: 2.5px; border: 1px solid ${p => (p.$sel ? "#252423" : "transparent")};
`;
const More = styled.div`
  height: 18px; margin-top: 5px; padding-left: 16px; display: flex; gap: 5.5px; align-items: center;
  i { width: 2.5px; height: 2.5px; background: #252423; }
`;
const Section = styled.div`border-top: 1px solid #e1dfdd; margin-top: 17px; padding-top: 11px; display: flex; flex-direction: column; font-size: 14.2px;`;
const Label = styled.div`
  height: 20px; line-height: 20px; padding-left: 15px; font-weight: ${p => (p.$b ? 600 : 400)}; color: ${p => (p.$b ? "#484644" : "#252423")}; margin-top: ${p => p.$mt || 0}px;
  letter-spacing: -0.05px;
`;
const Drop = styled.div`
  margin: ${p => p.$mt}px 0 0 5px; width: 212px; height: ${p => p.$h}px; line-height: ${p => p.$h - 2}px; background: #fff; border: 1px dashed #c0bebc; border-radius: 3px;
  padding-left: ${p => p.$pl}px; font-size: 14.4px; letter-spacing: -0.03px; white-space: nowrap;
`;
const ToggleRow = styled.div`display: flex; justify-content: space-between; align-items: center; padding: 0 29px 0 14px; height: 20px; margin-top: ${p => p.$mt}px;`;
const Toggle = styled.div`
  width: 40px; height: 20px; border-radius: 10px; border: 1px solid ${p => (p.$on ? GREEN : "#8a8886")}; background: ${p => (p.$on ? GREEN : "#fff")};
  color: ${p => (p.$on ? "#fff" : "#605e5c")}; display: flex; flex-direction: ${p => (p.$on ? "row-reverse" : "row")}; align-items: center; justify-content: space-between;
  font-size: 11px; padding: 0 5px; letter-spacing: -0.2px;
  i { width: 10px; height: 10px; border-radius: 50%; background: ${p => (p.$on ? "#fff" : "#605e5c")}; }
`;
const TooltipAnchor = styled.div`position: relative; width: 0; height: 0;`;
const Tooltip = styled.div`
  position: absolute; left: -43px; top: 86px; width: 134px; height: 39px; background: #fff; border-radius: 3px; z-index: 5;
  box-shadow: 0 6px 14px rgba(0,0,0,.2), 0 0 3px rgba(0,0,0,.12); line-height: 41px; text-align: center; font-size: 14.3px; letter-spacing: -0.05px; white-space: nowrap;
  &::after { content: ""; position: absolute; left: 57px; top: 38px; border: 9.5px solid transparent; border-top-color: #fff; border-bottom: 0; }
`;
const Dbl = ({ r }) => (
  <svg width="16" height="16" viewBox="0 0 16 16" fill="none" stroke="#252423" strokeWidth="1.3">
    <path d={r ? "M1 1l7 7-7 7M8 1l7 7-7 7" : "M8 1L1 8l7 7M15 1L8 8l7 7"} />
  </svg>
);

const V = ({ children }) => <svg width="23" height="23" viewBox="0 0 23 23" fill="none" stroke={K} strokeWidth="1.2">{children}</svg>;
const R = ({ x, y, w, h, f = "#fff", s = K, sw }) => <rect x={x} y={y} width={w} height={h} fill={f} stroke={s} strokeWidth={sw || 1.2} />;
const Ax = () => <path d="M.8 0v22.200H23" strokeWidth="1.5" />;
const bl = { f: B, s: BS }, gy = { f: G, s: GS };
const funnel = <path d="M13 12h9.500v2l-3.500 4v4.500l-3-1V18l-3-4z" fill="#fff" stroke="#484644" />;
const bolt = <path d="M3.500-1h6L7 4.500h3.500L1 13l2.500-6H-.5z" fill="#ffc36b" stroke="#dc6b00" strokeWidth="1" />;

const gallery = [
  <V><Ax /><R x="1.5" y="3" w="5" h="4.5" /><R x="6.5" y="3" w="9" h="4.5" {...bl} /><R x="1.5" y="14" w="8.5" h="4.5" /><R x="10" y="14" w="10" h="4.5" {...gy} /></V>,
  <V><Ax /><R x="4.5" y="15" w="5.5" h="7" /><R x="4.5" y="7" w="5.5" h="8" {...bl} /><R x="15" y="13" w="5" h="9" /><R x="15" y="3" w="5" h="10" {...gy} /></V>,
  <V><Ax /><R x="1.5" y="1.5" w="20.5" h="4" {...bl} /><R x="1.5" y="6" w="12.5" h="4" /><R x="1.5" y="11.5" w="9" h="4" {...gy} /><R x="1.5" y="16" w="15" h="4.5" /></V>,
  <V><Ax /><R x="2.5" y="1" w="4.5" h="21" {...bl} /><R x="7" y="10" w="4" h="12" /><R x="12.5" y="13" w="4" h="9" {...gy} /><R x="17" y="6.5" w="4.5" h="15.5" /></V>,
  <V><Ax /><R x="1.5" y="3" w="4.5" h="4.5" /><R x="6" y="3" w="14" h="4.5" {...bl} /><R x="1.5" y="14" w="11.5" h="4.5" /><R x="13" y="14" w="6.5" h="4.5" {...gy} /></V>,
  <V><Ax /><R x="4.5" y="18" w="5" h="4" /><R x="4.5" y="2.5" w="5" h="15.5" {...bl} /><R x="15" y="10" w="5" h="12" /><R x="15" y="2.5" w="5" h="7.5" {...gy} /></V>,

  <V><Ax /><path d="M2 15l8-8 6 5 6-5.500" /><path d="M2 19l13-14 7 7" stroke="#1e8bcd" strokeWidth="1.4" /></V>,
  <V><path d="M12 10l5-9.500 5 13V22h-5z" fill={G} stroke={GS} /><path d="M.5 14L8 3l8 9-9 9H.5z" fill="#fff" /><path d="M.7 14.500v7.800H22v-4L16 9.500l-8 9z" fill={B} stroke={BS} /></V>,
  <V><path d="M1 3l8 8 7-8 6.500 4.500v9L16 11.500l-6 8-9-8z" fill={B} stroke="none" /><path d="M1 3l8 7.500 7-7.500 6.500 4.500M1 11.500l8 8 7-8 6.500 5" stroke={BS} /><Ax /></V>,
  <V><path d="M1 3h21.500v12L16 11l-6 7.500-9-8z" fill={B} stroke={BS} /><Ax /></V>,
  <V><R x="4.5" y="3" w="5" h="13" {...bl} /><R x="15" y="3" w="5" h="8" {...gy} /><R x="15" y="12" w="5" h="10" /><path d="M1 22l8-8 5 3.500L22.500 9" strokeWidth="1.4" /><Ax /></V>,
  <V><R x="5" y="10" w="5" h="12" {...bl} /><R x="15" y="6" w="5.5" h="16" {...gy} /><R x="10" y="2" w="5" h="20" /><path d="M1 22l8-8 5 3.500L22.500 9" strokeWidth="1.4" /><Ax /></V>,

  <V><path d="M3 10q5-1 9 4t9 1v4q-6 1-9-1t-9 1z" fill="#fbb15c" stroke="#dc6b00" /><path d="M3 15h19v4H3z" fill="#fbb15c" stroke="#dc6b00" /><path d="M3 3q5 5 10 4t9-4v5q-4 3-9 4-6 0-10-4z" fill={G} stroke={GS} /><path d="M3 9q4 1 6 5 3 3 6 0 3-5 7-5v4q-3 0-5 4-4 4-7 0-3-4-7-4z" fill={B} stroke={BS} /><Ax /></V>,
  <V><R x="3" y="6" w="4" h="16" /><R x="7" y="6" w="4.5" h="16" /><R x="9.5" y="2" w="5.5" h="10" {...bl} /><R x="15" y="1.5" w="5.5" h="20.5" f={G} /><Ax /></V>,
  <V><R x=".6" y="1.5" w="21.8" h="5.5" {...bl} /><R x="3.5" y="7" w="16" h="6.5" {...bl} /><R x="6.5" y="13.5" w="10" h="6.5" {...bl} /></V>,
  <V><Ax /><R x="4.5" y="5.5" w="3" h="3" {...bl} sw=".8" /><R x="10.5" y="9.5" w="3" h="3" {...bl} sw=".8" /><R x="16.5" y="14.5" w="3" h="3" {...bl} sw=".8" /><R x="16.5" y="1.5" w="3" h="3" f={K} /><R x="4.5" y="15" w="3" h="3" f={K} /></V>,
  <V><circle cx="11.5" cy="11.5" r="10.8" fill="#fff" /><path d="M11.500.7a10.800 10.800 0 0 1 7 19L11.500 12z" fill={B} stroke={BS} /></V>,
  <V><circle cx="11.5" cy="11.5" r="8.500" stroke={BS} strokeWidth="6" /><circle cx="11.5" cy="11.5" r="8.5" stroke={B} strokeWidth="3.8" /><path d="M11.500.7A10.800 10.800 0 0 0 .7 11.500H6a5.500 5.500 0 0 1 5.500-5.500z" fill="#fff" stroke="#797775" /></V>,

  <V><R x=".6" y="1" w="10.5" h="11.5" {...bl} /><R x=".6" y="12.5" w="10.5" h="9.5" {...bl} /><R x="11.5" y="1" w="10.5" h="6" /><R x="11.5" y="7" w="4.5" h="15" /><R x="16" y="7" w="6" h="7.5" /><R x="16" y="14.5" w="6" h="7.5" /></V>,
  <V><circle cx="12" cy="10" r="7" fill="#fff" /><path d="M7.500 6.500q3-4 6-1l-2.500 4.500-3.500 0zM13 9l5-2v6l-3 2z" fill="#359c4a" stroke="#359c4a" /><path d="M9 .5A10 10 0 1 0 17 18.500M12 19v2.500M5 22h14" strokeWidth="1.5" /></V>,
  <V><path d="M.7 2.500q5 0 10 2l11.500-3v7q-3 8-11.500 13Q3 17 1.500 12z" fill={G} stroke={GS} /><path d="M.7 2.500q5 0 9 1.500l1 5L8 11l-6.500 1zM11 14l5-5 6-1q-1 7-7 10.500l-4 2.500z" fill={B} stroke={BS} /></V>,
  <V><path d="M15.500-.5L.5 22.500l10.500-6z" fill="#37a5cf" stroke="none" /><path d="M15.500-.5L20 23.500l-9-7z" fill="#2f7db4" stroke="none" /><path d="M20 24.500L12 17l4-1z" fill="#0f6cbd" stroke="none" /></V>,
  <V><path d="M.8 17.500q0-11 10.700-11v5q-5.500 0-5.500 6z" fill="#fff" /><path d="M9 6.500Q22 6 22.300 17.500h-5.500q0-6-5.300-6z" fill={B} stroke={BS} /><path d="M14.500 10.500l-3 7h-2z" fill={K} /></V>,
  <V><R x=".6" y="3.5" w="22" h="16" /><text x="3" y="14.5" fontSize="9.5" fontFamily={UI} fill="#1e8bcd" stroke="none">123</text><path d="M3.500 16.800h16" stroke={GS} /></V>,

  <V><R x=".8" y="1" w="21.5" h="21" /><path d="M4 4.500v14" stroke={GS} /><path d="M5.500 6.500h13M5.500 14.500h10" stroke={BS} strokeWidth="2.2" /><path d="M5.500 9h7M5.500 17.500h12" stroke={GS} /></V>,
  <V><R x=".6" y="2.5" w="22" h="17.5" /><path d="M3.500 12l3.500-6 3.500 6z" fill="#359c4a" stroke="#1d7d35" /><path d="M12.500 6h7.500l-3.700 6z" fill="#ef5350" stroke="#c62828" /><path d="M3.500 16h16" stroke={GS} /></V>,
  <V><R x=".6" y="1" w="21.5" h="20.5" /><path d="M1 3h21" stroke={G} strokeWidth="2.5" /><R x="4" y="8" w="3.5" h="3.5" {...gy} /><R x="4" y="15" w="3.5" h="3.5" {...gy} />{funnel}</V>,
  <V><R x=".6" y="1" w="21.8" h="21" /><path d="M1 3h21" stroke={G} strokeWidth="3" /><path d="M.6 5h22M.6 10.500h22M.6 16h22M7.500 5v17M15 5v17" stroke="#605e5c" /></V>,
  <V><R x=".6" y="1" w="21.8" h="21" /><path d="M1 3h21" stroke={G} strokeWidth="3" /><path d="M15 5h7.500v17H1v-6h14z" fill={B} stroke={BS} /><path d="M.6 5h22M.6 10.500h22M.6 16h22M7.500 5v17M15 5v17" stroke="#3b6a95" /><R x=".6" y="1" w="21.8" h="21" f="none" /></V>,
  <V><text x="4.5" y="18.5" fontSize="20" fontWeight="700" fontFamily={UI} fill="#1e8bcd" stroke="none" textLength="12" lengthAdjust="spacingAndGlyphs">R</text></V>,

  <V><text x="-.5" y="17.500" fontSize="20.5" fontWeight="700" fontFamily={UI} fill="#1e8bcd" stroke="none" textLength="24" lengthAdjust="spacingAndGlyphs">Py</text></V>,
  <V><Ax /><path d="M1 4h14" stroke="#1e8bcd" strokeWidth="1.5" /><circle cx="18.5" cy="4" r="2.8" fill={B} stroke={BS} /><path d="M1 10.500h10M1 15.500h6" stroke={GS} /><circle cx="13.5" cy="10.5" r="1.7" stroke={GS} /><circle cx="8.5" cy="15.5" r="1.7" stroke={GS} /></V>,
  <V><path d="M9 11h5M11.500 3.500v15.500M11.500 3.500H15M11.500 19H15" strokeWidth="1.5" /><R x=".6" y="8.5" w="8" h="5" {...bl} /><R x="14.5" y="1" w="8" h="5" {...bl} /><R x="14.5" y="8.5" w="8" h="5" {...bl} /><R x="14.5" y="16.5" w="8" h="5" {...bl} /></V>,
  <V><path d="M.7 2.500h21.800v14H11L5 21.500v-5H.7z" fill="#fff" stroke={BS} strokeWidth="1.4" /></V>,
  <V><path d="M3 7V1h11l6 6v15H3v-9" fill="#fff" stroke="#605e5c" /><path d="M14 1v6h6" stroke="#605e5c" /><circle cx="3.5" cy="10" r="2" fill={B} stroke={BS} /><path d="M8 10h7M6 15.500h9" stroke="#1e8bcd" /></V>,
  <V><path d="M5.500 3H.8q0 8 6 8.500M17.500 3h4.700q0 8-6 8.500" strokeWidth="1.4" /><path d="M5.500 2h12v8q-2 5-6 5t-6-5z" fill="#fff" /><path d="M5.500 1h12v3h-12z" fill={B} stroke={BS} /><path d="M11.500 15v4" strokeWidth="2" /><R x="6" y="18.5" w="11" h="3.5" {...bl} /></V>,

  <V><path d="M2.500.8H14l6 6.500v15.200H2.500z" fill="#fff" strokeWidth="1.5" /><path d="M14 .8V7h6" /><path d="M7 20v-5M11.500 20v-3M15.500 20v-8" strokeWidth="2.6" /></V>,
  <V><R x="2" y="3.5" w="20.5" h="16.5" /><text x="5" y="15" fontSize="9.5" fontFamily={UI} fill="#1e8bcd" stroke="none">123</text><path d="M4 17.500h15" stroke={GS} />{bolt}</V>,
  <V><R x="12.5" y="1.5" w="9" h="8.5" s={GS} /><R x="2.5" y="12.5" w="8.5" h="8.5" {...gy} f="#fff" /><R x="2.5" y="3" w="8" h="7" {...gy} f="#fff" />{funnel}{bolt}</V>,
  <V><path d="M3 1h19v8l-5 4v9H1.500V12z" fill={B} stroke={BS} /><path d="M17 4l-2 6-5 3-1 8" stroke="#fff" strokeWidth="2.5" /><path d="M0 4q0-5 4-5t4 5q0 3-4 8-4-5-4-8z" fill="#dc6b00" stroke="#f3f2f1" strokeWidth=".8" /><circle cx="4" cy="4" r="1.3" fill="#fff" stroke="none" /><circle cx="19.5" cy="19.5" r="3.2" fill="#dc6b00" stroke="none" /><circle cx="21.5" cy="13" r="1.8" fill="#dc6b00" stroke="none" /></V>,
  <V><path d="M6.500 1.500Q8 .5 10 1.500l6 8.500q1 1.500 0 3L10 21.500q-2 1-3.500 0L1 13q-1-1.500 0-3zM16.500 1.500Q15 .5 13 1.500l-6 8.500q-1 1.500 0 3l6 8.500q2 1 3.500 0L22 13q1-1.500 0-3z" stroke="#8a3a9c" strokeWidth="1.3" strokeLinejoin="round" /></V>,
  <V><path d="M1 1.500h13l8.500 10L14 21.500H1L10 11.500zM5 6l11 11M9 1.500l9 10-9 10" stroke="#1173d4" strokeWidth="1.4" strokeLinejoin="round" /></V>,
];

const railIcons = [
  <svg width="18" height="18" viewBox="0 0 18 18" fill="none" stroke="#252423" strokeWidth="1.5"><path d="M1.500 0v17H18" strokeWidth="1.8" /><path d="M4.500 4.500H7v9.500H4.500zM9 7.500h2.500V14H9zM14 1.500h2.500V14H14z" fill="#999" strokeWidth="1.2" /></svg>,
  <svg width="22" height="20" viewBox="0 0 22 20" fill="none" stroke="#797775" strokeWidth="1.4"><path d="M1.500 1h19v17.500h-19zM1.500 4.500h19M1.500 9.500h19M1.500 14h19M8 4.500v14M14.500 4.500v14" /><path d="M1.500 2.500h19" strokeWidth="2" /></svg>,
  <svg width="24" height="24" viewBox="0 0 24 24" fill="none" stroke="#797775" strokeWidth="1.4"><path d="M1 8h9v9H1zM14 1h9v9h-9zM14 14h9v9h-9zM1 10.500h9M14 3.500h9M14 16.500h9M5.500 8V4.500H14M5.500 17v3.500H14" /></svg>,
  <svg width="22" height="22" viewBox="0 0 22 22" fill="none" stroke="#797775" strokeWidth="1.3"><path d="M4.500 11V3.500q0-2.500 2.500-2.500h6l6 6v10M12 1v6h7M20.500 9v8q0 4-3.500 4" /><text x="-1" y="20.5" fontSize="8.5" fontWeight="600" fontFamily={UI} fill="#605e5c" stroke="none" textLength="17" lengthAdjust="spacingAndGlyphs">DAX</text></svg>,
];

export default function App() {
  return (
    <Window>
      <Global />
      <Ribbon />
      <Body>
        <Rail>{railIcons.map((ic, i) => <RailItem key={i} $active={i === 0}>{ic}</RailItem>)}</Rail>
        <Center>
          <Work>
            <Canvas>
              <Report>
                <Col $w={842}>
                  <Row $h={517}><BarChart /><LineChart /></Row>
                  <Slicers />
                </Col>
                <Col $w={483}><Donut /><MapVisual /><StockTable /><MatrixTable /></Col>
              </Report>
            </Canvas>
            <FilterStrip>
              <Dbl />
              <FilterIcon><svg width="14" height="16" viewBox="0 0 14 16" fill="none" stroke="#252423" strokeWidth="1.5"><path d="M13 1v14L7.500 10H1V6h6.500z" /></svg></FilterIcon>
              <Vertical $mt={10}>Filters</Vertical>
            </FilterStrip>
          </Work>
          <PageTabs>
            <ViewBtn $ml={12} $pt={8} $on><svg width="24" height="19" viewBox="0 0 24 19" fill="none" stroke="#605e5c" strokeWidth="1.7"><path d="M1 1h22v12.500H1zM12 13.500V17M8 17.500h8" /></svg></ViewBtn>
            <ViewBtn $ml={25} $pt={6}><svg width="16" height="25" viewBox="0 0 16 25" fill="none" stroke="#605e5c" strokeWidth="1.7"><rect x="1" y="1" width="14" height="23" rx="1" /><path d="M6.500 21h3" /></svg></ViewBtn>
            <Arrow $ml={20} /><Arrow $ml={22} $r />
            <PageTab>OverView</PageTab>
            <AddTab><svg width="14" height="14" viewBox="0 0 14 14"><path d="M7 0v14M0 7h14" stroke="#fff" strokeWidth="3.6" /></svg></AddTab>
          </PageTabs>
        </Center>
        <VizPane>
          <TooltipAnchor><Tooltip>Stacked bar chart</Tooltip></TooltipAnchor>
          <PaneHead>Visualizations<Dbl r /></PaneHead>
          <Sub>Build visual</Sub>
          <ModeRow>
            <Mode $on><svg width="30" height="14" viewBox="0 0 30 14"><path d="M0 1h24" stroke="#252423" strokeWidth="1.6" /><rect x=".7" y="7" width="28.6" height="14" fill="#2f9a83" stroke="#252423" strokeWidth="1.5" strokeDasharray="3 1.5" /></svg></Mode>
            <Mode><svg width="31" height="31" viewBox="0 0 31 31" fill="none" stroke={K} strokeWidth="1.6"><path d="M6 29.500H1V1h13l7 8v4M14 1v8h7" fill="#fff" /><path d="M30 11q-2 8-11 15l-3-3Q23 14 30 11z" fill="#fff" /><path d="M16 23q-4 0-4 3t-4 3.500q5 1.500 8.500 0t2.500-4z" fill="#979593" /></svg></Mode>
          </ModeRow>
          <Gallery>{gallery.map((g, i) => <Cell key={i} $sel={i === 0}>{g}</Cell>)}</Gallery>
          <More><i /><i /><i /></More>
          <Section>
            <Label>Values</Label>
            <Drop $mt={6} $h={35} $pl={12}>Add data fields here</Drop>
            <Label $b $mt={14}>Drill through</Label>
            <ToggleRow $mt={10}>Cross-report<Toggle><i />Off</Toggle></ToggleRow>
            <ToggleRow $mt={14}>Keep all filters<Toggle $on><i />On</Toggle></ToggleRow>
            <Drop $mt={14} $h={32} $pl={10}>Add drill-through fields here</Drop>
          </Section>
        </VizPane>
        <DataPane><Dbl /><Vertical $mt={17} $fs={18.5} $ls="-0.1px">Data</Vertical></DataPane>
      </Body>
      <Status>
        Page 1 of 1<Spacer />
        <svg width="153" height="16" viewBox="0 0 153 16"><path d="M0 7.500h6M144 7.500h9M148.500 3v9" stroke="#484644" strokeWidth="2" /><path d="M12 8h125M74.500 4.500v7" stroke="#605e5c" strokeWidth="1.1" fill="none" /><rect x="60" y="1.5" width="5" height="13" fill="#605e5c" /></svg>
        <Pct>83%</Pct>
        <svg width="21" height="16" viewBox="0 0 21 16" fill="none" stroke="#605e5c" strokeWidth="1.5"><path d="M.8.8h19.400v14.400H.8z" /><path d="M4 6.500V4h3M14 4h3v2.500M4 9.500V12h3M14 12h3V9.500" strokeWidth="1.2" /></svg>
      </Status>
    </Window>
  );
}
